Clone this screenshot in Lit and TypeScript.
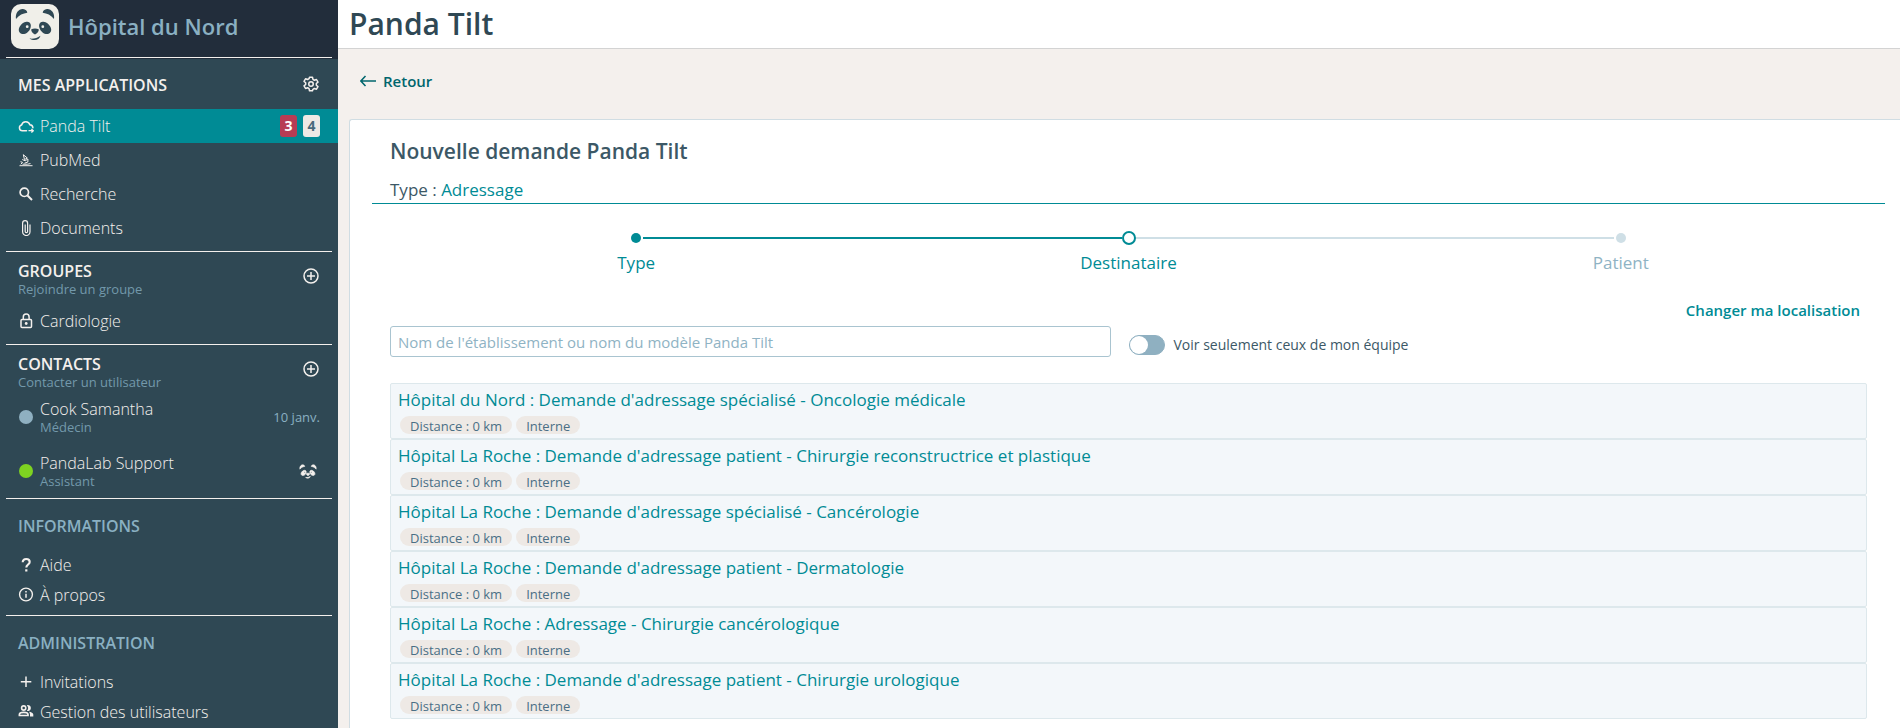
import { LitElement, html, css, svg, nothing } from "lit";
import { customElement, state } from "lit/decorators.js";
import { classMap } from "lit/directives/class-map.js";

const pandaFace = svg`
  <path d="M5 15C4 9 8 4.600 12 5c2.700.3 4 1.800 4.300 3.700C12 9.300 8 11 5 15z"/>
  <path d="M43 15c1-6-3-10.400-7-10-2.700.3-4 1.800-4.300 3.700C36 9.300 40 11 43 15z"/>
  <path fill-rule="evenodd" d="M15.500 17.800c3.500-.6 5.300 2.700 3.900 6.400-1.400 3.900-5 6.300-8.400 5.700C7.900 29.200 6.800 25.800 8.800 22.500c1.500-2.600 3.700-4.200 6.700-4.700zm.7 3.500a1.400 1.400 0 1 0 0 2.800 1.400 1.400 0 0 0 0-2.800z"/>
  <path fill-rule="evenodd" d="M32.500 17.800c-3.500-.6-5.300 2.700-3.900 6.400 1.400 3.900 5 6.300 8.400 5.700 3.100-.7 4.200-4.100 2.200-7.400-1.500-2.600-3.700-4.200-6.700-4.700zm-.7 3.500a1.400 1.400 0 1 1 0 2.800 1.400 1.400 0 0 1 0-2.800z"/>
  <path d="M20.300 25.300c2-1.200 5.400-1.200 7.400 0 .5 2.200-1.500 4.200-3.700 5.200-2.200-1-4.200-3-3.700-5.200z"/>
  <path d="M18.500 34.500c4 .5 7.500-.3 11-2.700C28.500 36 23 37.500 18.500 34.500z"/>`;

const icons: Record<string, unknown> = {
  cloud: svg`<path d="M8.500 12.700H4.300A2.900 2.900 0 0 1 3.600 7a4.300 4.300 0 0 1 8.300-.2c1.800.2 2.900 1.400 3 2.900" fill="none" stroke="currentColor" stroke-width="1.500" stroke-linecap="round"/><path d="M10.500 12.700h4.500M13.400 11l1.900 1.700-1.900 1.700" fill="none" stroke="currentColor" stroke-width="1.300"/>`,
  pubmed: svg`<path d="M5.300 2.700l4 3.300-2.800 1.600zM4.200 7.500l3 1.300 2.700-1.800v3l-3.400 1.200M2.500 9.700l2 .6-1.700 2M1.500 13.700h13M4.500 12.200h5l3-.6" fill="none" stroke="currentColor" stroke-width="1"/>`,
  search: svg`<circle cx="6.300" cy="6.300" r="4.200" fill="none" stroke="currentColor" stroke-width="1.700"/><path d="M9.500 9.500l4.500 4.500" stroke="currentColor" stroke-width="2"/>`,
  clip: svg`<path d="M12 4.500v7.300a3.700 3.700 0 0 1-7.400 0V3.200a2.500 2.500 0 0 1 5 0v8.300a1.200 1.200 0 0 1-2.400 0V4.500" fill="none" stroke="currentColor" stroke-width="1.200"/>`,
  lock: svg`<rect x="3" y="6.500" width="10.500" height="8" rx="1" fill="none" stroke="currentColor" stroke-width="1.500"/><path d="M5.300 6.500V4a2.900 2.900 0 0 1 5.800 0v2.500" fill="none" stroke="currentColor" stroke-width="1.500"/><circle cx="8.200" cy="10.500" r="1.400" fill="currentColor"/>`,
  help: svg`<path d="M4.700 5.200c0-2 1.500-3.200 3.500-3.200s3.500 1.200 3.500 3c0 2.400-3.400 2.700-3.400 5.500" fill="none" stroke="currentColor" stroke-width="2.100"/><rect x="7.200" y="12.300" width="2.200" height="2.200" fill="currentColor"/>`,
  info: svg`<circle cx="8" cy="7.500" r="6.400" fill="none" stroke="currentColor" stroke-width="1.400"/><path d="M8 6.800v4M8 4.100v1.500" stroke="currentColor" stroke-width="1.500"/>`,
  plus: svg`<path d="M8 2.500v10.500M2.800 7.700h10.500" stroke="currentColor" stroke-width="1.500"/>`,
  people: svg`<circle cx="5.700" cy="4" r="2.100" fill="none" stroke="currentColor" stroke-width="1.600"/><path d="M8.800 1.200a3 3 0 1 1 0 5.600 4 4 0 0 0 0-5.600z" fill="currentColor"/><path d="M1.400 11.500v-1c0-1.500 2.500-2.200 4.300-2.200s4.300.7 4.300 2.200v1z" fill="none" stroke="currentColor" stroke-width="1.700"/><path d="M11 7.800c2.200.3 4.300 1.200 4.300 2.700v1.900h-3.300v-2c0-1.100-.4-1.900-1-2.600z" fill="currentColor"/>`,
};

const icon = (name: string) =>
  html`<svg class="icon" viewBox="0 0 16 16" width="16" height="16" aria-hidden="true">${icons[name]}</svg>`;

interface NavItem {
  icon: string;
  label: string;
  active?: boolean;
  urgent?: number;
  count?: number;
}

const applications: NavItem[] = [
  { icon: "cloud", label: "Panda Tilt", active: true, urgent: 3, count: 4 },
  { icon: "pubmed", label: "PubMed" },
  { icon: "search", label: "Recherche" },
  { icon: "clip", label: "Documents" },
];
const groups: NavItem[] = [{ icon: "lock", label: "Cardiologie" }];
const informations: NavItem[] = [
  { icon: "help", label: "Aide" },
  { icon: "info", label: "À propos" },
];
const administration: NavItem[] = [
  { icon: "plus", label: "Invitations" },
  { icon: "people", label: "Gestion des utilisateurs" },
];

@customElement("side-bar")
export class SideBar extends LitElement {
  static styles = css`
    :host {
      display: block;
      background: #2f4854;
      color: #f4f0ed;
      font-size: 16px;
    }
    .brand {
      background: #222d3b;
      padding-bottom: 1px;
    }
    .brand-line {
      display: flex;
      align-items: center;
      gap: 9px;
      height: 52px;
      margin: 0 6px;
      padding: 0 5px 5px;
      border-bottom: 1px solid #f4f0ed;
    }
    .brand-name {
      font-size: 22px;
      font-weight: 600;
      color: #8ab0c2;
    }
    .section {
      border-bottom: 1px solid #f4f0ed;
      margin: 0 6px;
    }
    .section:last-child {
      border-bottom: 0;
    }
    .apps,
    .groups {
      padding-bottom: 6px;
    }
    .plain {
      padding-bottom: 5px;
    }
    .head {
      display: flex;
      justify-content: space-between;
      align-items: flex-start;
      padding: 9px 12px 0;
    }
    .apps .head {
      padding: 16px 12px 14px;
    }
    .plain .head {
      padding: 17px 12px 14px;
    }
    .groups .list {
      margin-top: 7px;
    }
    h2 {
      margin: 0;
      font-size: 16px;
      line-height: 20px;
      font-weight: 600;
    }
    .plain h2 {
      color: #8ab0c2;
    }
    .sub {
      display: block;
      font-size: 13px;
      line-height: 16px;
      color: #7399ab;
      text-decoration: none;
    }
    .tool {
      display: block;
      padding: 0;
      border: 0;
      background: none;
      color: inherit;
    }
    .tool svg {
      display: block;
    }
    .add {
      margin-top: 6px;
    }
    .list {
      list-style: none;
      margin: 0 -6px;
      padding: 0;
    }
    .item {
      display: flex;
      align-items: center;
      gap: 6px;
      height: 34px;
      padding: 0 18px;
      color: inherit;
      text-decoration: none;
      font-weight: 300;
    }
    .plain .item {
      height: 30px;
    }
    .item.active {
      background: #008b95;
    }
    .label {
      flex: 1;
    }
    .badge {
      width: 17px;
      line-height: 22px;
      border-radius: 3px;
      text-align: center;
      font-size: 14px;
      font-weight: 700;
      background: #eee9e5;
      color: #4a6a7c;
    }
    .badge.urgent {
      background: #b83c54;
      color: #ffffff;
    }
    .contact {
      display: flex;
      align-items: center;
      gap: 6px;
      height: 54px;
      padding: 0 18px;
      color: inherit;
      text-decoration: none;
    }
    .dot {
      width: 14px;
      height: 14px;
      margin: 0 1px;
      border-radius: 50%;
      background: #8fb0c1;
    }
    .dot.online {
      background: #7ed321;
    }
    .who {
      flex: 1;
      line-height: 20px;
      font-weight: 300;
    }
    .who .sub {
      font-weight: 400;
    }
    .date {
      font-size: 13px;
      color: #8ab0c2;
    }
    .mascot {
      margin-right: 3px;
      fill: #f4f0ed;
      stroke: #f4f0ed;
      stroke-width: 1.500;
    }
    .icon {
      flex: none;
    }
  `;

  private items(list: NavItem[]) {
    return html`<ul class="list">
      ${list.map(
        (i) => html`<li>
          <a class=${classMap({ item: true, active: !!i.active })} href="#">
            ${icon(i.icon)}<span class="label">${i.label}</span>
            ${i.urgent ? html`<span class="badge urgent">${i.urgent}</span>` : nothing}
            ${i.count ? html`<span class="badge">${i.count}</span>` : nothing}
          </a>
        </li>`
      )}
    </ul>`;
  }

  private addButton(label: string) {
    return html`<button class="tool add" aria-label=${label}>
      <svg viewBox="0 0 18 18" width="18" height="18">
        <circle cx="9" cy="9" r="7" fill="none" stroke="currentColor" stroke-width="1.500" />
        <path d="M9 5v8M5 9h8" stroke="currentColor" stroke-width="1.500" />
      </svg>
    </button>`;
  }

  render() {
    return html`
      <div class="brand">
        <div class="brand-line">
          <svg viewBox="0 0 48 45" width="48" height="45" aria-hidden="true">
            <rect width="48" height="45" rx="10" fill="#f0efe9" />
            <g fill="#2f4854">${pandaFace}</g>
          </svg>
          <span class="brand-name">Hôpital du Nord</span>
        </div>
      </div>
      <nav>
        <section class="section apps">
          <div class="head">
            <h2>MES APPLICATIONS</h2>
            <button class="tool" aria-label="Paramètres">
              <svg viewBox="0 0 24 24" width="18" height="18" fill="none" stroke="currentColor" stroke-width="2" stroke-linejoin="round">
                <path d="M10 3h4l.6 2.900 1.900 1.100 2.800-1 2 3.500-2.200 1.900v2.200l2.200 1.900-2 3.500-2.800-1-1.900 1.100L14 21h-4l-.6-2.900L7.500 17l-2.800 1-2-3.500 2.200-1.900v-2.200L2.700 8.500l2-3.500 2.800 1 1.900-1.100z" />
                <circle cx="12" cy="12" r="3" />
              </svg>
            </button>
          </div>
          ${this.items(applications)}
        </section>
        <section class="section groups">
          <div class="head">
            <div>
              <h2>GROUPES</h2>
              <a class="sub" href="#">Rejoindre un groupe</a>
            </div>
            ${this.addButton("Ajouter un groupe")}
          </div>
          ${this.items(groups)}
        </section>
        <section class="section contacts">
          <div class="head">
            <div>
              <h2>CONTACTS</h2>
              <a class="sub" href="#">Contacter un utilisateur</a>
            </div>
            ${this.addButton("Ajouter un contact")}
          </div>
          <ul class="list">
            <li>
              <a class="contact" href="#">
                <span class="dot"></span>
                <span class="who">Cook Samantha<span class="sub">Médecin</span></span>
                <span class="date">10 janv.</span>
              </a>
            </li>
            <li>
              <a class="contact" href="#">
                <span class="dot online"></span>
                <span class="who">PandaLab Support<span class="sub">Assistant</span></span>
                <svg class="mascot" viewBox="3 3 42 35" width="18" height="15" aria-hidden="true">${pandaFace}</svg>
              </a>
            </li>
          </ul>
        </section>
        <section class="section plain">
          <div class="head"><h2>INFORMATIONS</h2></div>
          ${this.items(informations)}
        </section>
        <section class="section plain">
          <div class="head"><h2>ADMINISTRATION</h2></div>
          ${this.items(administration)}
        </section>
      </nav>
    `;
  }
}

const results = [
  "Hôpital du Nord : Demande d'adressage spécialisé - Oncologie médicale",
  "Hôpital La Roche : Demande d'adressage patient - Chirurgie reconstructrice et plastique",
  "Hôpital La Roche : Demande d'adressage spécialisé - Cancérologie",
  "Hôpital La Roche : Demande d'adressage patient - Dermatologie",
  "Hôpital La Roche : Adressage - Chirurgie cancérologique",
  "Hôpital La Roche : Demande d'adressage patient - Chirurgie urologique",
];

const steps = [
  { label: "Type", status: "done" },
  { label: "Destinataire", status: "current" },
  { label: "Patient", status: "todo" },
];

@customElement("app-root")
export class AppRoot extends LitElement {
  @state() private teamOnly = false;

  static styles = css`
    :host {
      display: grid;
      grid-template-columns: 338px minmax(0, 1fr);
      height: 100vh;
      overflow: hidden;
      font-family: "Open Sans", "Noto Sans", sans-serif;
      color: #3c5866;
      background: #f4f0ed;
    }
    main {
      display: flex;
      flex-direction: column;
      min-height: 0;
    }
    side-bar {
      overflow: hidden;
    }
    .top {
      background: #ffffff;
      border-bottom: 1px solid #d3d3d3;
      padding: 0 11px;
    }
    h1 {
      margin: 0;
      font-size: 30px;
      line-height: 48px;
      font-weight: 600;
      color: #2f4854;
    }
    .back {
      align-self: flex-start;
      display: flex;
      align-items: center;
      gap: 7px;
      margin: 22px 0 28px 22px;
      font-size: 15px;
      line-height: 20px;
      font-weight: 600;
      color: #00666d;
      text-decoration: none;
    }
    .card {
      flex: 1;
      margin-left: 11px;
      padding: 17px 15px 0 22px;
      background: #ffffff;
      border: solid #d0dde3;
      border-width: 1px 0 0 1px;
      border-radius: 3px 0 0 0;
    }
    .card-head {
      padding: 0 18px 1px;
      border-bottom: 1px solid #008b95;
    }
    h2 {
      margin: 0 0 13px;
      font-size: 21px;
      line-height: 28px;
      font-weight: 600;
    }
    .kind {
      margin: 0;
      font-size: 17px;
      line-height: 24px;
    }
    .kind a {
      color: #008b95;
      text-decoration: none;
    }
    .body {
      padding: 27px 18px 0;
    }
    .steps {
      display: grid;
      grid-template-columns: repeat(3, 1fr);
      list-style: none;
      margin: 0;
      padding: 0;
      font-size: 17px;
      line-height: 24px;
      text-align: center;
      color: #008b95;
    }
    .step.todo {
      color: #8fb3c4;
    }
    .track {
      display: flex;
      align-items: center;
      height: 14px;
      margin-bottom: 6px;
    }
    .line {
      flex: 1;
      height: 2px;
      background: #cfdfe6;
    }
    .step.done .line,
    .step.current .line:first-child {
      background: #008b95;
    }
    .step:first-child .line:first-child,
    .step:last-child .line:last-child {
      background: none;
    }
    .mark {
      width: 10px;
      height: 10px;
      margin: 0 2px;
      border-radius: 50%;
      background: #008b95;
    }
    .step.current .mark {
      margin: 0;
      border: 2px solid #008b95;
      background: #ffffff;
    }
    .step.todo .mark {
      background: #cfdfe6;
    }
    .place {
      display: flex;
      justify-content: flex-end;
      margin: 25px 7px 6px;
    }
    .place button {
      padding: 0;
      border: 0;
      background: none;
      font: 600 15px/20px "Open Sans", "Noto Sans", sans-serif;
      color: #008b95;
    }
    .filters {
      display: grid;
      grid-template-columns: 1fr 1fr;
      align-items: end;
      margin-bottom: 26px;
    }
    .field {
      display: flex;
      padding-right: 18px;
    }
    .search {
      flex: 1;
      height: 31px;
      box-sizing: border-box;
      padding: 0 7px;
      border: 1px solid #a9c4d0;
      border-radius: 3px;
      font: 400 15px "Open Sans", "Noto Sans", sans-serif;
      color: #3c5866;
    }
    .search::placeholder {
      color: #8fb3c4;
      opacity: 1;
    }
    .team {
      display: flex;
      align-items: center;
      gap: 9px;
      padding-bottom: 2px;
      font-size: 14px;
      line-height: 20px;
    }
    .switch {
      appearance: none;
      display: flex;
      width: 36px;
      height: 20px;
      margin: 0;
      border: 1px solid #8fb0c1;
      border-radius: 10px;
      background: #8fb0c1;
    }
    .switch::before {
      content: "";
      width: 18px;
      height: 18px;
      border-radius: 50%;
      background: #ffffff;
    }
    .switch:checked {
      justify-content: flex-end;
      background: #008b95;
    }
    .results {
      list-style: none;
      margin: 0;
      padding: 0;
    }
    .result {
      display: block;
      padding: 4px 7px;
      border: 1px solid #dde8ec;
      border-radius: 2px;
      background: #f3f7fa;
      font-size: 17px;
      line-height: 24px;
      color: #008b95;
      text-decoration: none;
    }
    .tags {
      display: flex;
      gap: 4px;
      margin: 4px 2px 0;
    }
    .tag {
      padding: 2px 10px 0;
      border-radius: 9px;
      background: #eee9e5;
      font-size: 13px;
      line-height: 16px;
      color: #4a6f85;
    }
  `;

  render() {
    return html`
      <side-bar></side-bar>
      <main>
        <header class="top"><h1>Panda Tilt</h1></header>
        <a class="back" href="#">
          <svg viewBox="0 0 16 12" width="16" height="12" fill="none" stroke="currentColor" stroke-width="1.500" aria-hidden="true">
            <path d="M16 6H1M5.500 1L.9 6l4.600 5" />
          </svg>
          Retour
        </a>
        <section class="card">
          <div class="card-head">
            <h2>Nouvelle demande Panda Tilt</h2>
            <p class="kind">Type : <a href="#">Adressage</a></p>
          </div>
          <div class="body">
            <ol class="steps">
              ${steps.map(
                (s) => html`<li class="step ${s.status}">
                  <div class="track"><span class="line"></span><span class="mark"></span><span class="line"></span></div>
                  ${s.label}
                </li>`
              )}
            </ol>
            <div class="place"><button>Changer ma localisation</button></div>
            <div class="filters">
              <div class="field">
                <input
                  class="search"
                  type="text"
                  aria-label="Nom de l'établissement ou nom du modèle Panda Tilt"
                  placeholder="Nom de l'établissement ou nom du modèle Panda Tilt"
                />
              </div>
              <label class="team">
                <input
                  class="switch"
                  type="checkbox"
                  .checked=${this.teamOnly}
                  @change=${(e: Event) => (this.teamOnly = (e.target as HTMLInputElement).checked)}
                />
                Voir seulement ceux de mon équipe
              </label>
            </div>
            <ul class="results">
              ${results.map(
                (r) => html`<li>
                  <a class="result" href="#">
                    ${r}
                    <div class="tags"><span class="tag">Distance : 0 km</span><span class="tag">Interne</span></div>
                  </a>
                </li>`
              )}
            </ul>
          </div>
        </section>
      </main>
    `;
  }
}
